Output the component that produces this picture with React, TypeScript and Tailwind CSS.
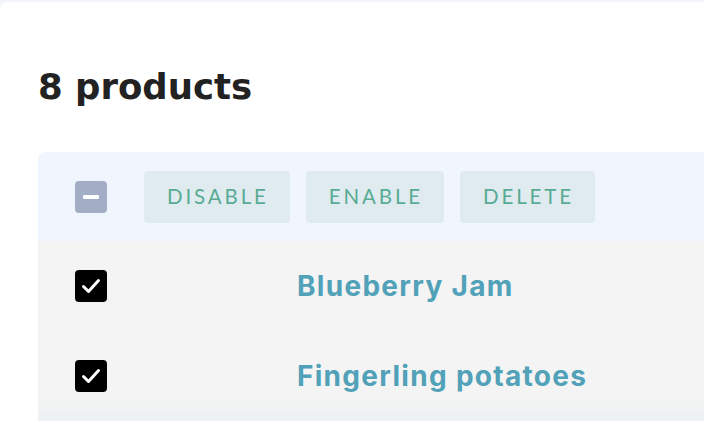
import * as React from "react";

const products = ["Blueberry Jam", "Fingerling potatoes"];

const CheckMark = () => (
    <svg viewBox="0 0 32 32" className="w-8 h-8">
        <rect x="0" y="0" width="32" height="32" rx="4" fill="#000" />
        <path d="M8.5 16.5 L13.5 21.5 L23.5 10.5" fill="none" stroke="#fff" strokeWidth="3" strokeLinecap="round" strokeLinejoin="round" />
    </svg>
);

export default function App() {
    return (
        <div className="w-[704px] h-[430px] overflow-hidden bg-[#f2f5fb] pt-[2px]">
            <div className="h-full bg-white rounded-tl-lg pl-[38px] pt-[67px]">
                <h1 className="text-[35.5px] leading-[36px] font-bold text-[#222] font-['DejaVu_Sans',sans-serif]">8 products</h1>
                <div className="mt-[47px]">
                    <div className="h-[89px] flex items-center bg-[#f1f5fd] rounded-tl-lg pl-[37px]">
                        <div className="w-8 h-8 rounded bg-[#a1aec6] flex items-center justify-center">
                            <div className="w-4 h-[4px] bg-white rounded-[1px]" />
                        </div>
                        <div className="ml-[37px] flex gap-4">
                            {["DISABLE", "ENABLE", "DELETE"].map((label) => (
                                <button key={label} className="h-[52px] pl-[23px] pr-[21px] rounded bg-[#e0ebf0] text-[#58ab94] text-[20.5px] tracking-[0.14em] font-['Lato',sans-serif]">
                                    {label}
                                </button>
                            ))}
                        </div>
                    </div>
                    {products.map((name, i) => (
                        <div key={name} className={`h-[90px] flex items-center bg-[#f4f4f4] ${i === products.length - 1 ? "bg-gradient-to-b from-[#f4f4f4] from-70% to-[#edf1f3]" : ""}`}>
                            <div className="w-[259px] pl-[37px]">
                                <CheckMark />
                            </div>
                            <span className="text-[28px] font-bold text-[#51a1b8] font-['Inter',sans-serif] tracking-[1.3px]">{name}</span>
                        </div>
                    ))}
                </div>
            </div>
        </div>
    );
}
